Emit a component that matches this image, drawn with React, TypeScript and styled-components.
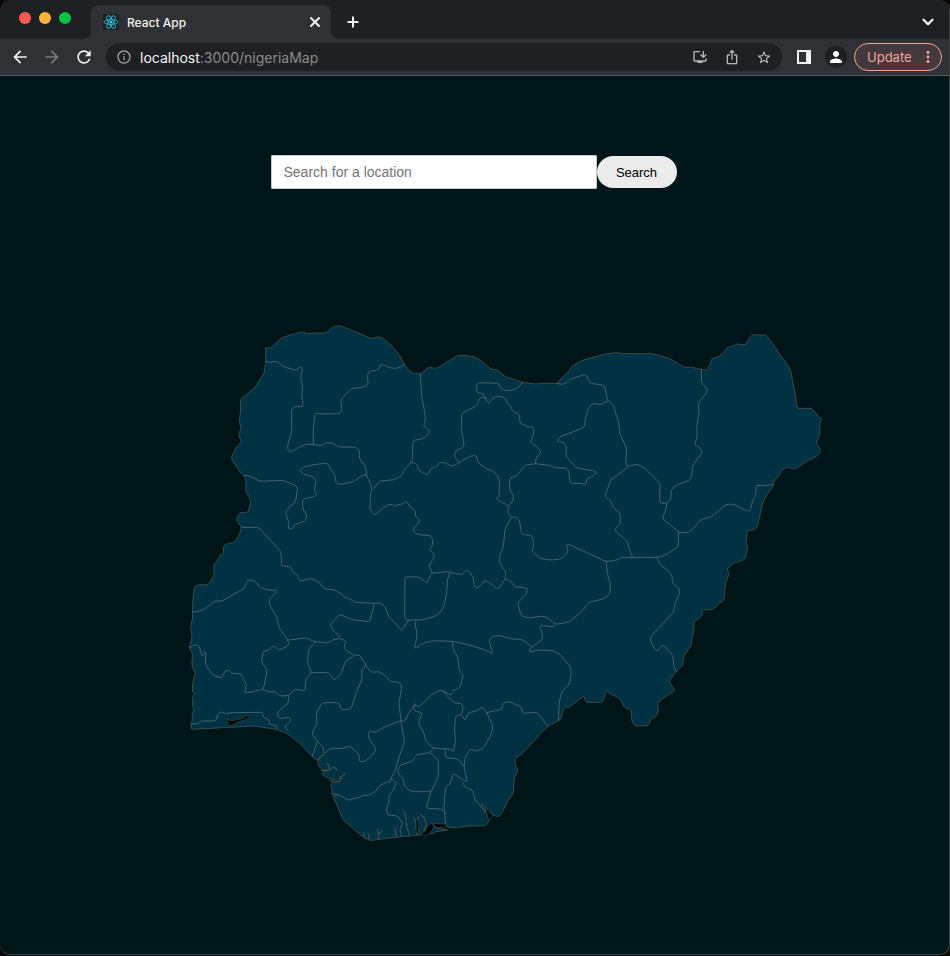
import React from "react";
import styled, { createGlobalStyle } from "styled-components";
import { ChevronDown, Plus, X } from "lucide-react";
import {
  MdArrowBack,
  MdArrowForward,
  MdInfoOutline,
  MdIosShare,
  MdMoreVert,
  MdOutlineInstallDesktop,
  MdPerson,
  MdRefresh,
  MdStarBorder,
} from "react-icons/md";

const colors = {
  strip: "#1f2023",
  bar: "#303135",
  page: "#001518",
  land: "#003243",
  border: "#44626d",
  coast: "#3b4b4e",
  pink: "#f4a49b",
};

const GlobalStyle = createGlobalStyle`
  * { box-sizing: border-box; }
  body { margin: 0; background: #0c0808; }
  button, input { font: inherit; }
`;

const Window = styled.div`
  display: flex;
  flex-direction: column;
  min-height: calc(100vh - 1px);
  overflow: hidden;
  background: ${colors.page};
  border: solid #3a4446;
  border-width: 0 1px 1px 0;
  border-radius: 10px;
  font-family: Inter, "Liberation Sans", sans-serif;
`;

const TabStrip = styled.header`
  display: flex;
  align-items: center;
  height: 39px;
  padding: 0 11px 0 19px;
  background: ${colors.strip};
`;

const Lights = styled.div`
  display: flex;
  gap: 8px;
  margin: 0 20px 3px 0;
`;

const Light = styled.button<{ $color: string }>`
  width: 12px;
  height: 12px;
  padding: 0;
  border: 0;
  border-radius: 50%;
  background: ${(p) => p.$color};
`;

const Tab = styled.div`
  position: relative;
  display: flex;
  align-items: center;
  align-self: flex-end;
  gap: 8px;
  width: 240px;
  height: 34px;
  padding: 0 8px 0 12px;
  border-radius: 8px 8px 0 0;
  background: ${colors.bar};
  color: #f1f3f4;
  font-size: 12px;
  font-weight: 500;

  &::before,
  &::after {
    content: "";
    position: absolute;
    bottom: 0;
    width: 8px;
    height: 8px;
  }
  &::before {
    right: 100%;
    background: radial-gradient(circle at 0 0, transparent 8px, ${colors.bar} 8px);
  }
  &::after {
    left: 100%;
    background: radial-gradient(circle at 100% 0, transparent 8px, ${colors.bar} 8px);
  }
`;

const TabTitle = styled.span`
  flex: 1;
`;

const IconButton = styled.button<{ $color?: string; $size?: number }>`
  display: inline-flex;
  align-items: center;
  justify-content: center;
  flex: none;
  width: ${(p) => p.$size ?? 16}px;
  height: ${(p) => p.$size ?? 16}px;
  padding: 0;
  border: 0;
  background: none;
  color: ${(p) => p.$color ?? "#f1f3f4"};
`;

const NewTab = styled(IconButton)`
  margin: 5px auto 0 14px;
`;

const TabSearch = styled(IconButton)`
  margin-top: 5px;
`;

const Toolbar = styled.nav`
  display: flex;
  align-items: center;
  height: 37px;
  padding: 0 7px 0 10px;
  background: ${colors.bar};
  border-bottom: 1px solid #55595c;
`;

const NavButtons = styled.div`
  display: flex;
  gap: 12px;
  margin-right: 12px;
`;

const Omnibox = styled.div`
  display: flex;
  align-items: center;
  flex: 1;
  min-width: 0;
  height: 28px;
  gap: 16px;
  padding: 0 10px;
  border-radius: 14px;
  background: ${colors.strip};
`;

const Address = styled.span`
  flex: 1;
  margin-left: -8px;
  color: #8b8c8e;
  font-size: 14px;
`;

const Host = styled.span`
  color: #f4f5f6;
`;

const Actions = styled.div`
  display: flex;
  align-items: center;
  gap: 7px;
  margin-left: 11px;
`;

const Avatar = styled.button`
  display: flex;
  align-items: center;
  justify-content: center;
  width: 22px;
  height: 22px;
  margin-left: 3px;
  padding: 0;
  border: 0;
  border-radius: 50%;
  background: ${colors.strip};
  color: #fff;
`;

const Update = styled.button`
  display: flex;
  align-items: center;
  justify-content: space-between;
  width: 88px;
  height: 28px;
  padding: 0 4px 0 12px;
  border: 1px solid ${colors.pink};
  border-radius: 14px;
  background: #43383c;
  color: ${colors.pink};
  font-size: 13px;
`;

const Page = styled.main`
  display: flex;
  flex: 1;
  flex-direction: column;
  align-items: center;
  padding: 79px 16px 40px;
`;

const SearchForm = styled.form`
  display: flex;
  align-items: center;
  justify-content: center;
  width: 100%;
  margin-bottom: 121px;
  padding-right: 2px;
  font-family: "Liberation Sans", Arial, sans-serif;
`;

const SearchInput = styled.input`
  flex: 0 1 326px;
  min-width: 0;
  height: 34px;
  padding: 0 12px;
  border: 1px solid #c4c9ca;
  border-radius: 1px;
  background: #fff;
  color: #222;
  font-size: 14px;

  &::placeholder {
    color: #757575;
  }
`;

const SearchButton = styled.button`
  width: 80px;
  height: 32px;
  padding: 0;
  border: 0;
  border-radius: 16px;
  background: #ebebeb;
  color: #000;
  font-size: 13px;
`;

const MapDrawing = styled.svg`
  display: block;
  width: 100%;
  max-width: 710px;
  height: auto;
  stroke-linejoin: round;
  stroke-linecap: round;
`;

const coastline =
  "257 115 273 113 305 84 330 75 372 65 378 71 410 69 440 69 455 52 481 47 575 86 595 80 610 85 640 113 660 138 673 163 685 180 698 190 721 192 728 187 744 172 768 175 780 170 835 135 882 140 910 157 932 177 953 180 978 201 1028 217 1070 222 1085 219 1130 221 1170 178 1178 166 1210 150 1260 136 1300 128 1338 131 1418 131 1468 145 1500 164 1515 173 1538 171 1550 176 1564 178 1582 181 1586 168 1591 163 1593 150 1601 143 1613 142 1632 127 1640 113 1655 109 1673 101 1686 105 1698 104 1704 90 1717 74 1760 76 1831 178 1848 265 1851 295 1895 295 1903 305 1920 325 1926 325 1919 340 1920 370 1908 402 1920 412 1920 430 1895 448 1880 452 1860 468 1843 478 1820 470 1802 485 1795 500 1784 510 1781 524 1750 572 1742 605 1732 652 1720 660 1700 662 1702 680 1697 695 1703 710 1696 745 1688 751 1660 760 1640 777 1646 785 1645 800 1636 820 1633 865 1628 876 1618 877 1610 890 1595 899 1565 900 1568 915 1555 928 1542 932 1541 970 1535 985 1535 1002 1510 1040 1508 1065 1488 1085 1466 1114 1485 1142 1458 1158 1432 1180 1435 1200 1430 1218 1412 1227 1405 1247 1363 1248 1355 1230 1354 1200 1332 1192 1323 1170 1317 1164 1285 1148 1280 1138 1273 1160 1267 1177 1218 1177 1212 1157 1168 1192 1153 1191 1140 1230 1125 1237 1105 1248 1085 1267 1060 1295 1025 1332 1005 1345 1005 1365 1015 1382 1003 1400 1000 1450 985 1470 965 1510 953 1522 947 1516 940 1518 930 1502 901 1478 915 1498 928 1515 927 1532 918 1547 860 1548 830 1554 800 1551 798 1543 760 1545 768 1555 805 1560 765 1565 760 1570 735 1572 690 1578 655 1581 596 1588 572 1592 554 1584 525 1560 490 1530 475 1495 458 1455 452 1418 480 1415 488 1395 474 1407 450 1407 425 1393 430 1384 448 1381 425 1380 412 1360 420 1342 408 1352 397 1340 360 1300 320 1270 285 1257 220 1248 130 1253 32 1258 37 1230 36 1210 42 1200 38 1190 38 1160 43 1148 37 1145 38 1120 46 1088 36 1070 37 1030 28 1013 36 980 32 950 37 930 38 880 43 828 65 823 75 826 90 820 103 790 101 765 118 745 120 733 131 733 130 707 145 700 163 698 178 675 185 652 169 630 180 607 203 608 212 580 210 565 197 545 198 520 192 496 185 492 153 445 170 410 185 395 175 375 183 355 178 335 182 300 181 268 225 233 253 188 257 155 257 115";

const stateBorders = [
  "257 155 270 157 290 153 308 169 350 182 360 170 367 172 366 185 361 200 368 228 365 255 370 290 342 290 334 300 335 365 323 405 323 420 333 427 350 415 380 402 430 407 435 398 460 400 475 411 525 411 540 420 537 445 557 470 559 495 577 535 571 550 570 600 585 617 600 600 625 583 638 583 642 589 656 583 668 583 673 574 685 578 688 592 700 595 706 605 706 620 722 631 696 660 710 673 752 677 758 687 757 710 746 719 758 727 765 740 750 760 748 770 756 788",
  "400 403 400 350 407 308 420 312 478 311 486 303 482 270 513 236 550 232 565 222 562 195 568 184 597 180 600 164 612 164 630 174 655 175 673 163",
  "192 496 208 497 240 514 310 511 353 530 347 575 318 600 318 618 326 632 324 656 338 658 342 644 375 633 380 625 378 610 368 595 367 568 380 565 408 558 410 550 402 540 409 520 406 505 390 497 370 493 358 483 370 472 400 464 443 459 452 478 465 495 467 520 485 523 520 515 550 495 559 495",
  "580 537 600 512 640 510 665 498 675 475 695 457 698 440 698 392 730 386 748 370 748 360 730 348 737 330 732 295 725 260 721 192",
  "695 457 712 462 715 480 743 497 752 475 772 470 775 459 790 456 818 470 838 457 875 437 890 437 893 457 920 477 940 483 958 505 958 558 947 567 965 577 987 587 982 607 995 622 975 655 970 710 958 740 960 760 978 788 975 805",
  "838 457 823 440 825 423 853 410 845 360 845 310 890 288 900 263 912 260 918 268 927 283 938 262 960 258 980 266 980 282 995 290 995 303 1018 312 1020 342 1035 345 1042 352 1060 350 1062 370 1050 398 1068 408 1085 426 1068 442 1067 461",
  "918 268 910 250 890 248 890 222 900 218 958 220 963 238 985 243 1010 236 1028 217",
  "987 587 1000 570 1000 557 988 535 990 503 1010 498 1035 465 1067 461 1115 467 1125 474 1160 474 1167 485 1170 520 1205 520 1218 525 1220 505 1235 502 1250 488 1245 483 1190 474 1168 450 1157 437 1160 415 1153 397 1130 395 1135 383 1150 377 1213 352 1217 320 1230 285 1245 280 1260 285 1283 273",
  "1130 221 1155 223 1172 207 1215 193 1222 200 1230 220 1260 224 1274 227 1282 270 1302 288 1308 315 1315 330 1320 370 1340 418 1337 462 1345 470 1370 462 1395 475 1425 505 1440 520 1439 580 1460 580 1472 570 1474 538 1490 525 1530 510 1536 495 1537 467 1567 428 1560 410 1543 406 1552 380 1550 355 1557 305 1554 280 1582 245 1580 233 1564 218 1564 178",
  "1460 580 1458 600 1447 620 1452 632 1473 645 1495 667 1522 669 1540 657 1560 630 1595 620 1610 607 1638 583 1660 582 1700 603 1710 603 1717 575 1727 555 1729 525 1745 527 1781 524",
  "1345 470 1310 498 1295 505 1273 560 1292 570 1298 593 1320 608 1321 642 1302 660 1343 695 1348 720 1358 741",
  "1495 667 1495 710 1455 736 1430 742 1325 742 1308 751 1278 755 1165 702 1158 707 1166 723 1150 740 1140 748 1110 750 1080 745 1055 722 1062 705 1057 677 1025 673 1022 655 1018 630 1005 620 995 622",
  "1278 755 1283 795 1291 820 1290 852 1270 867 1225 877 1205 905 1165 937 1127 943 1100 922 1085 918 1045 925 1022 915 1018 895 1012 880 1040 850 1042 837 1035 832 1005 832 992 813 975 805 960 832 950 837 930 817 912 811 902 827 888 836 882 825 880 802 865 781 853 783 847 795 815 788 808 783 805 790 800 782 790 788 756 788 740 820 718 801 675 800 674 925 680 931 730 929 770 917 790 895 800 850 803 805 810 788",
  "1430 742 1445 770 1465 780 1477 800 1477 820 1498 835 1499 850 1483 885 1483 903 1410 983 1415 1000 1428 1022 1437 1020 1443 1008 1452 1006 1478 1035 1482 1070 1488 1085",
  "1127 943 1120 951 1085 946 1078 952 1088 972 1086 990 1048 1017 1048 1027 1075 1020 1118 1022 1138 1032 1170 1068 1174 1085 1168 1123 1145 1145 1138 1175 1135 1232",
  "1055 1010 1025 988 1000 988 957 976 935 980 927 995 940 1032 915 1020 860 1003 817 994 755 992 725 1002 704 1017 704 1005 710 990 710 960 704 945 708 932",
  "185 652 235 652 303 725 305 768 333 770 337 787 353 793 358 814 393 805 420 818 430 836 465 840 480 850 498 865 513 867 523 877 583 880 600 878 615 890 627 923 645 938 663 962 672 952 685 931",
  "583 880 570 935 520 930 478 913 450 945 460 962 480 980 478 987 458 988 447 1000 408 995 390 990 380 983 323 991 310 970 297 952 290 920 268 885 268 868 290 845 290 838 280 842 245 835 220 810 202 810 193 835 125 874 105 872 70 900 38 907",
  "28 1013 45 1004 58 1006 63 1032 70 1040 73 1024 78 1028 75 1060 98 1095 125 1105 133 1085 147 1079 155 1091 185 1091 190 1110 200 1120 193 1150 250 1138 262 1080 244 1055 250 1023 265 1022 280 1006 298 1021 328 1004 323 991",
  "250 1138 263 1145 290 1145 297 1158 326 1157 345 1137 375 1143 378 1105 395 1090 383 1060 385 1020 408 995",
  "395 1088 447 1088 462 1112 483 1092 497 1052 525 1036 495 1020 492 1002 500 995 480 985",
  "525 1036 540 1035 558 1067 573 1088 597 1084 620 1100 633 1117 650 1114 666 1127 657 1180 663 1233 667 1260 674 1295 663 1325 652 1360 645 1385 630 1407 632 1414",
  "558 1067 543 1078 547 1105 530 1145 513 1197 483 1201 478 1178 427 1178 408 1210 412 1240 395 1270 412 1295 430 1310 432 1333 450 1315 485 1316 510 1308 538 1335 538 1357 560 1352 590 1320 570 1290 563 1270 575 1260 582 1270 605 1255 640 1240 663 1233 678 1231 685 1210 705 1182 715 1192 760 1150 785 1140 815 1157 815 1145 840 1132 842 1125 850 1092 838 1085 833 1040 820 1020 817 994",
  "412 1295 397 1338",
  "326 1157 325 1180 293 1205 293 1220 305 1227 330 1220 332 1235 312 1250 325 1262",
  "32 1242 55 1241 60 1233 108 1233 115 1210 125 1204 138 1213 150 1208 250 1207 247 1222 270 1230 265 1242 292 1247 290 1255",
  "705 1182 700 1203 727 1208 715 1240 732 1270 738 1295 760 1315 812 1317 820 1327 827 1290 823 1260 827 1217 845 1215 850 1190 842 1179 825 1180 800 1157 790 1142",
  "845 1215 855 1233 865 1208 890 1203 907 1190 920 1208 940 1250 930 1280 910 1315 885 1325 872 1315 855 1345 852 1370 862 1417 850 1410 820 1390 810 1423 797 1428 792 1490 797 1543",
  "920 1208 965 1198 970 1178 990 1175 1025 1192 1028 1210 1070 1207 1105 1248",
  "760 1315 750 1328 708 1335 698 1353 660 1365 652 1390 670 1405 672 1428 695 1445 753 1445 775 1400 775 1350 750 1328",
  "795 1318 797 1343 835 1347 852 1370",
  "753 1445 738 1495 785 1497 797 1510",
  "850 1420 855 1433 878 1440 885 1470 925 1515",
  "463 1452 482 1456 505 1472 525 1464 542 1463 547 1454 562 1458 590 1443 592 1434 610 1420 632 1413 634 1404 650 1420 636 1445 625 1460 628 1475 618 1500 625 1517 643 1516 655 1520 668 1540 663 1552",
];

const creeks = [
  "550 1568 555 1585",
  "565 1570 568 1588",
  "592 1558 596 1572 595 1587",
  "605 1563 595 1575",
  "645 1555 650 1582",
  "663 1550 660 1560 665 1580",
  "672 1505 678 1520 680 1550 688 1576",
  "700 1525 708 1535 710 1572",
  "715 1520 712 1550 718 1566",
  "722 1515 733 1524 740 1545 732 1562",
  "412 1350 420 1342 432 1333",
  "425 1380 446 1383 448 1370 442 1360",
  "448 1380 460 1370 473 1380",
  "450 1412 478 1414 484 1397 497 1390",
  "455 1450 470 1455 464 1460",
];

const openWater = [
  "142 1226 150 1232 163 1231 185 1226 200 1217 213 1219 195 1230 165 1240 160 1246 145 1246 142 1226",
  "755 1538 742 1550 735 1564 720 1572 735 1578 750 1570 762 1552 755 1538",
  "758 1540 798 1542 799 1552 768 1553 758 1540",
  "708 1532 716 1526 716 1566 709 1572 708 1532",
  "915 1495 930 1510 940 1517 926 1530 915 1495",
];

/** Turns "x y x y …" into a path whose corners are rounded by up to `radius` units. */
function roundedPath(coords: string, radius = 6): string {
  const n = coords.split(" ").map(Number);
  const pts: [number, number][] = [];
  for (let i = 0; i < n.length; i += 2) pts.push([n[i], n[i + 1]]);

  const toward = (a: [number, number], b: [number, number]) => {
    const length = Math.hypot(b[0] - a[0], b[1] - a[1]) || 1;
    const t = Math.min(radius / length, 0.5);
    return `${(a[0] + (b[0] - a[0]) * t).toFixed(1)} ${(a[1] + (b[1] - a[1]) * t).toFixed(1)}`;
  };

  let d = `M${pts[0].join(" ")}`;
  for (let i = 1; i < pts.length - 1; i++) {
    d += `L${toward(pts[i], pts[i - 1])}Q${pts[i].join(" ")} ${toward(pts[i], pts[i + 1])}`;
  }
  return `${d}L${pts[pts.length - 1].join(" ")}`;
}

function ReactLogo() {
  return (
    <svg width="16" height="16" viewBox="0 0 32 32" aria-hidden="true">
      <rect width="32" height="32" rx="3" fill="#202124" />
      <g fill="none" stroke="#25a9c3" strokeWidth="2">
        <ellipse cx="16" cy="16" rx="14" ry="5" />
        <ellipse cx="16" cy="16" rx="14" ry="5" transform="rotate(60 16 16)" />
        <ellipse cx="16" cy="16" rx="14" ry="5" transform="rotate(120 16 16)" />
      </g>
      <circle cx="16" cy="16" r="3" fill="#43c5dd" />
    </svg>
  );
}

function SidePanelIcon() {
  return (
    <svg width="14" height="14" viewBox="0 0 14 14" aria-hidden="true">
      <path fill="#f1f3f4" fillRule="evenodd" d="M0 0h14v14H0zM2 2v10h7V2z" />
    </svg>
  );
}

function NigeriaMap() {
  return (
    <MapDrawing viewBox="-180 0 2130 1620" role="img" aria-label="Map of Nigeria">
      <path d={roundedPath(coastline)} fill={colors.land} stroke={colors.coast} strokeWidth="3" />
      <g fill="none" stroke={colors.border} strokeWidth="3">
        {stateBorders.map((line) => (
          <path key={line} d={roundedPath(line, 8)} />
        ))}
      </g>
      <g fill="none" stroke={colors.coast} strokeWidth="4">
        {creeks.map((line) => (
          <path key={line} d={roundedPath(line)} />
        ))}
      </g>
      <g fill="#02090b" stroke={colors.coast} strokeWidth="2">
        {openWater.map((line) => (
          <path key={line} d={roundedPath(line, 3)} />
        ))}
      </g>
    </MapDrawing>
  );
}

export default function App() {
  return (
    <>
      <GlobalStyle />
      <Window>
        <TabStrip>
          <Lights>
            <Light $color="#ff5a52" aria-label="Close window" />
            <Light $color="#ffb43c" aria-label="Minimize window" />
            <Light $color="#00c543" aria-label="Zoom window" />
          </Lights>
          <Tab>
            <ReactLogo />
            <TabTitle>React App</TabTitle>
            <IconButton aria-label="Close tab">
              <X size={16} strokeWidth={3} />
            </IconButton>
          </Tab>
          <NewTab aria-label="New tab">
            <Plus size={18} strokeWidth={3} />
          </NewTab>
          <TabSearch $size={20} aria-label="Search tabs">
            <ChevronDown size={18} strokeWidth={3} />
          </TabSearch>
        </TabStrip>

        <Toolbar>
          <NavButtons>
            <IconButton $size={20} aria-label="Back">
              <MdArrowBack size={20} />
            </IconButton>
            <IconButton $size={20} $color="#77797c" aria-label="Forward">
              <MdArrowForward size={20} />
            </IconButton>
            <IconButton $size={20} aria-label="Reload">
              <MdRefresh size={20} />
            </IconButton>
          </NavButtons>
          <Omnibox>
            <IconButton $color="#9aa0a6" aria-label="Site information">
              <MdInfoOutline size={16} />
            </IconButton>
            <Address>
              <Host>localhost</Host>:3000/nigeriaMap
            </Address>
            <IconButton $color="#b4b6b9" aria-label="Install app">
              <MdOutlineInstallDesktop size={16} />
            </IconButton>
            <IconButton $color="#b4b6b9" aria-label="Share">
              <MdIosShare size={16} />
            </IconButton>
            <IconButton $color="#c4c7c5" aria-label="Bookmark">
              <MdStarBorder size={17} />
            </IconButton>
          </Omnibox>
          <Actions>
            <IconButton $size={22} aria-label="Side panel">
              <SidePanelIcon />
            </IconButton>
            <Avatar aria-label="Profile">
              <MdPerson size={18} />
            </Avatar>
            <Update>
              Update
              <MdMoreVert size={18} />
            </Update>
          </Actions>
        </Toolbar>

        <Page>
          <SearchForm onSubmit={(event) => event.preventDefault()}>
            <SearchInput
              type="text"
              aria-label="Search for a location"
              placeholder="Search for a location"
            />
            <SearchButton type="submit">Search</SearchButton>
          </SearchForm>
          <NigeriaMap />
        </Page>
      </Window>
    </>
  );
}
